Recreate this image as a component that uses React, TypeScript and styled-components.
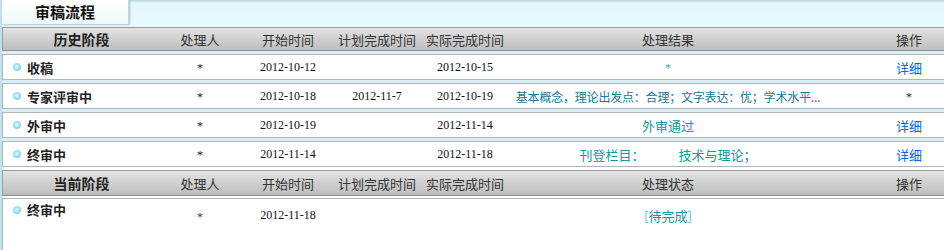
import React from "react";
import styled, { createGlobalStyle } from "styled-components";

const GlobalStyle = createGlobalStyle`
  body {
    margin: 0;
    background: #ffffff;
    overflow: hidden;
    font-family: "Noto Sans CJK SC", "Liberation Sans", sans-serif;
  }
`;

const COLS = "157px 80px 96px 82px 94px 312px 1fr";

const Page = styled.div`
  width: 946px;
  border-left: 2px solid #bde4ee;
`;

const TabBar = styled.div`
  height: 27px;
  background: linear-gradient(#b7d3dc 0, #e4f7fc 3px, #e9fafe 100%);
  display: flex;
  align-items: flex-start;
`;

const Tab = styled.div`
  width: 126px;
  height: 24px;
  background: linear-gradient(#ffffff, #eef9fc);
  border-right: 1px solid #c4d6dc;
  box-shadow: 1px 1px 2px rgba(0, 0, 0, 0.22);
  display: flex;
  align-items: center;
  justify-content: center;
  font-size: 15px;
  font-weight: 700;
  color: #111;
  line-height: 18px;
`;

const History = styled.div`
  background: #dbeef3;
  display: flex;
  flex-direction: column;
  gap: 3px;
`;

const Header = styled.div<{ $framed?: boolean }>`
  display: grid;
  grid-template-columns: ${COLS};
  height: ${(p) => (p.$framed ? 24 : 22)}px;
  align-items: center;
  background: linear-gradient(#e3e3e3, #bdbdbd);
  border-top: 1px solid #9a9a9a;
  border-bottom: 1px solid #8e8e8e;
  border-left: 1px solid #9a9a9a;
  font-size: 13px;
  color: #333;
  line-height: 17px;
`;

const HeadCell = styled.div<{ $bold?: boolean; $op?: boolean }>`
  text-align: center;
  padding-left: ${(p) => (p.$op ? 46 : 0)}px;
  font-weight: ${(p) => (p.$bold ? 700 : 400)};
  font-size: ${(p) => (p.$bold ? 14 : 13)}px;
  color: ${(p) => (p.$bold ? "#222" : "#333")};
`;

const Row = styled.div<{ $tall?: boolean }>`
  display: grid;
  grid-template-columns: ${COLS};
  height: ${(p) => (p.$tall ? 52 : 24)}px;
  align-items: ${(p) => (p.$tall ? "start" : "center")};
  background: #fff;
  border: 1px solid #aeb6ba;
  border-right: none;
  line-height: 17px;
`;

const StageCell = styled.div<{ $top?: boolean }>`
  display: flex;
  align-items: center;
  gap: 6px;
  padding-left: 10px;
  padding-top: ${(p) => (p.$top ? 2 : 0)}px;
  font-size: 13px;
  font-weight: 700;
  color: #222;
`;

const Dot = styled.span`
  width: 8px;
  height: 8px;
  border-radius: 50%;
  background: radial-gradient(circle at 45% 45%, #e8fbff 0, #9fe4fb 40%, #55c6f0 100%);
  flex-shrink: 0;
`;

const Cell = styled.div<{ $color?: string; $serif?: boolean; $top?: number; $op?: boolean; $small?: boolean }>`
  text-align: center;
  padding-left: ${(p) => (p.$op ? 46 : 0)}px;
  padding-top: ${(p) => p.$top ?? 0}px;
  font-family: ${(p) =>
    p.$serif ? '"Liberation Serif", serif' : '"Noto Sans CJK SC", "Liberation Sans", sans-serif'};
  font-size: ${(p) => (p.$serif || p.$small ? 12 : 13)}px;
  letter-spacing: ${(p) => (p.$small ? "-0.2px" : "normal")};
  color: ${(p) => p.$color ?? "#111"};
  white-space: nowrap;
`;

const Star = styled.span<{ $color?: string }>`
  font-family: "Liberation Serif", serif;
  font-size: 12px;
  color: ${(p) => p.$color ?? "#222"};
`;

const Link = styled.a`
  color: #0a66ee;
  text-decoration: none;
  font-size: 13px;
`;

const Gap = styled.span`
  display: inline-block;
  width: 34px;
`;

const Current = styled.div`
  background: #fff;
  padding-top: 3px;
  display: flex;
  flex-direction: column;
  gap: 2px;
`;

const Bracket = styled.span`
  color: #4cc6d6;
`;

interface Stage {
  name: string;
  start: string;
  plan: string;
  actual: string;
  result: React.ReactNode;
  small?: boolean;
  op: React.ReactNode;
}

const stages: Stage[] = [
  {
    name: "收稿",
    start: "2012-10-12",
    plan: "",
    actual: "2012-10-15",
    result: <Star $color="#3aa8b0">*</Star>,
    op: <Link href="#">详细</Link>,
  },
  {
    name: "专家评审中",
    start: "2012-10-18",
    plan: "2012-11-7",
    actual: "2012-10-19",
    result: "基本概念，理论出发点：合理；文字表达：优；学术水平...",
    small: true,
    op: <Star $color="#3a2030">*</Star>,
  },
  {
    name: "外审中",
    start: "2012-10-19",
    plan: "",
    actual: "2012-11-14",
    result: <span style={{ color: "#10999c" }}>外审通过</span>,
    op: <Link href="#">详细</Link>,
  },
  {
    name: "终审中",
    start: "2012-11-14",
    plan: "",
    actual: "2012-11-18",
    result: (
      <span style={{ color: "#10999c" }}>
        刊登栏目：<Gap />技术与理论；
      </span>
    ),
    op: <Link href="#">详细</Link>,
  },
];

const App = () => {
  return (
    <Page>
      <GlobalStyle />
      <TabBar>
        <Tab>审稿流程</Tab>
      </TabBar>
      <History>
        <Header>
          <HeadCell $bold>历史阶段</HeadCell>
          <HeadCell>处理人</HeadCell>
          <HeadCell>开始时间</HeadCell>
          <HeadCell>计划完成时间</HeadCell>
          <HeadCell>实际完成时间</HeadCell>
          <HeadCell>处理结果</HeadCell>
          <HeadCell $op>操作</HeadCell>
        </Header>
        {stages.map((s) => (
          <Row key={s.name}>
            <StageCell>
              <Dot />
              {s.name}
            </StageCell>
            <Cell>
              <Star>*</Star>
            </Cell>
            <Cell $serif>{s.start}</Cell>
            <Cell $serif>{s.plan}</Cell>
            <Cell $serif>{s.actual}</Cell>
            <Cell $color="#23769a" $small={s.small}>
              {s.result}
            </Cell>
            <Cell $op>{s.op}</Cell>
          </Row>
        ))}
      </History>
      <Current>
        <Header $framed>
          <HeadCell $bold>当前阶段</HeadCell>
          <HeadCell>处理人</HeadCell>
          <HeadCell>开始时间</HeadCell>
          <HeadCell>计划完成时间</HeadCell>
          <HeadCell>实际完成时间</HeadCell>
          <HeadCell>处理状态</HeadCell>
          <HeadCell $op>操作</HeadCell>
        </Header>
        <Row $tall>
          <StageCell $top>
            <Dot />
            终审中
          </StageCell>
          <Cell $top={8}>
            <Star $color="#6a2a2a">*</Star>
          </Cell>
          <Cell $serif $top={8}>
            2012-11-18
          </Cell>
          <Cell $serif $top={8}></Cell>
          <Cell $serif $top={8}></Cell>
          <Cell $color="#10999c" $top={8}>
            <Bracket>[</Bracket>待完成<Bracket>]</Bracket>
          </Cell>
          <Cell $op $top={8}></Cell>
        </Row>
      </Current>
    </Page>
  );
};

export default App;
